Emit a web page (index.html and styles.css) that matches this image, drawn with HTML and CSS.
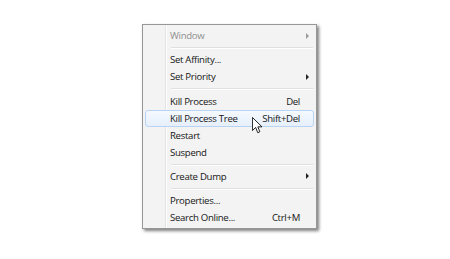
FILE: index.html
```html
<!DOCTYPE html>
<html>
<head>
<meta charset="utf-8">
<link rel="stylesheet" href="styles.css">
</head>
<body>
<div class="stage">
  <div class="menu">
    <div class="item disabled"><span class="label">Window</span><span class="arrow"></span></div>
    <div class="sep"></div>
    <div class="item"><span class="label">Set Affinity...</span><span class="arrow none"></span></div>
    <div class="item"><span class="label">Set Priority</span><span class="arrow"></span></div>
    <div class="sep"></div>
    <div class="item"><span class="label">Kill Process</span><span class="key">Del</span><span class="arrow none"></span></div>
    <div class="item hot"><span class="label">Kill Process Tree</span><span class="key">Shift+Del</span><span class="arrow none"></span></div>
    <div class="item"><span class="label">Restart</span><span class="arrow none"></span></div>
    <div class="item"><span class="label">Suspend</span><span class="arrow none"></span></div>
    <div class="sep"></div>
    <div class="item"><span class="label">Create Dump</span><span class="arrow"></span></div>
    <div class="sep"></div>
    <div class="item"><span class="label">Properties...</span><span class="arrow none"></span></div>
    <div class="item"><span class="label">Search Online...</span><span class="key">Ctrl+M</span><span class="arrow none"></span></div>
    <svg class="cursor" width="11" height="17" viewBox="0 0 13 20" aria-hidden="true">
      <path d="M0.5 0.5 L0.5 16 L4.3 12.3 L6.8 18.5 L9.3 17.4 L6.9 11.6 L11.8 11.6 Z" fill="#fff" stroke="#000" stroke-width="1" stroke-linejoin="miter"/>
    </svg>
  </div>
</div>
</body>
</html>
```

FILE: styles.css
```css
html, body {
  margin: 0;
  padding: 0;
  background: #ffffff;
}
body {
  width: 450px;
  height: 259px;
  overflow: hidden;
  font-family: "Open Sans", "Noto Sans", sans-serif;
}
.stage {
  padding: 24px 0 0 142px;
}
.menu {
  position: relative;
  width: 169px;
  padding: 2px 2px 2px 2px;
  border: 1px solid #979797;
  background:
    linear-gradient(to right, transparent 22px, #e2e3e3 22px, #e2e3e3 23px, #ffffff 23px, #ffffff 24px, transparent 24px),
    #f3f3f3;
  box-shadow: 2px 2px 3px rgba(0, 0, 0, 0.5);
}
.item {
  display: flex;
  align-items: center;
  height: 15px;
  border: 1px solid transparent;
  border-radius: 3px;
  padding-left: 24px;
  font-size: 9.6px;
  letter-spacing: -0.3px;
  color: #161616;
  white-space: nowrap;
}
.item.disabled {
  color: #8f8f8f;
}
.item.hot {
  border-color: #b9d3f2;
  background: linear-gradient(to bottom, #f5f9fe, #e6effb);
}
.label {
  flex: 1;
}
.key {
  text-align: right;
}
.arrow {
  width: 13px;
  height: 15px;
  display: flex;
  align-items: center;
  justify-content: center;
}
.arrow::after {
  content: "";
  display: block;
  margin-left: 2px;
  border-left: 3px solid #222;
  border-top: 3px solid transparent;
  border-bottom: 3px solid transparent;
}
.disabled .arrow::after {
  border-left-color: #999;
}
.arrow.none::after {
  display: none;
}
.sep {
  height: 7.25px;
  margin-left: 26px;
  margin-right: 1px;
  background: linear-gradient(to bottom, transparent 3px, #e0e0e0 3px, #e0e0e0 4px, #ffffff 4px, #ffffff 5px, transparent 5px);
}
.cursor {
  position: absolute;
  left: 109px;
  top: 92px;
  display: block;
}
```
